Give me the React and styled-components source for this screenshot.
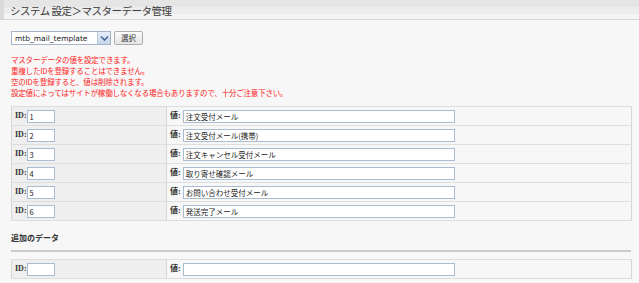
import React from "react";
import styled, { createGlobalStyle } from "styled-components";

const GlobalStyle = createGlobalStyle`
  html, body {
    margin: 0;
    padding: 0;
    background: #f7f7f7;
    font-family: "Noto Sans CJK JP", "DejaVu Sans", sans-serif;
    color: #333;
  }
`;

const rows = [
  { id: "1", value: "注文受付メール" },
  { id: "2", value: "注文受付メール(携帯)" },
  { id: "3", value: "注文キャンセル受付メール" },
  { id: "4", value: "取り寄せ確認メール" },
  { id: "5", value: "お問い合わせ受付メール" },
  { id: "6", value: "発送完了メール" },
];

export default function App() {
  return (
    <Page>
      <GlobalStyle />
      <TitleBar>
        <h1>システム 設定＞マスターデータ管理</h1>
      </TitleBar>
      <Content>
        <SelectRow>
          <Select>
            <span>mtb_mail_template</span>
            <Arrow>
              <svg width="9" height="7" viewBox="0 0 9 7">
                <path d="M1 1.5 L4.5 5 L8 1.5" fill="none" stroke="#4a6a9a" strokeWidth="1.6" />
              </svg>
            </Arrow>
          </Select>
          <Button>選択</Button>
        </SelectRow>
        <Notice>
          <p>マスターデータの値を設定できます。</p>
          <p>重複したIDを登録することはできません。</p>
          <p>空のIDを登録すると、値は削除されます。</p>
          <p>設定値によってはサイトが稼働しなくなる場合もありますので、十分ご注意下さい。</p>
        </Notice>
        <DataTable>
          <tbody>
            {rows.map((r) => (
              <tr key={r.id}>
                <IdCell>
                  <Label>ID:</Label>
                  <IdInput>{r.id}</IdInput>
                </IdCell>
                <ValueCell>
                  <Label>値:</Label>
                  <ValueInput>{r.value}</ValueInput>
                </ValueCell>
              </tr>
            ))}
          </tbody>
        </DataTable>
        <SubHeading>追加のデータ</SubHeading>
        <DataTable>
          <tbody>
            <tr>
              <IdCell>
                <Label>ID:</Label>
                <IdInput />
              </IdCell>
              <ValueCell>
                <Label>値:</Label>
                <ValueInput />
              </ValueCell>
            </tr>
          </tbody>
        </DataTable>
      </Content>
    </Page>
  );
}

const Page = styled.div`
  width: 639px;
  height: 283px;
  overflow: hidden;
`;

const TitleBar = styled.div`
  height: 19px;
  border-bottom: 1px solid #d8d8d8;
  border-left: 4px solid #dadada;
  background: linear-gradient(#e5e5e5 0, #e5e5e5 7px, #ececec 7px, #ececec 14px, #f4f4f4 14px);
  h1 {
    margin: 0;
    padding-left: 6px;
    font-size: 10.5px;
    letter-spacing: -0.5px;
    font-weight: normal;
    line-height: 21px;
    color: #3a3a3a;
    white-space: pre;
  }
`;

const Content = styled.div`
  padding: 11px 8px 0 11px;
`;

const SelectRow = styled.div`
  display: flex;
  align-items: center;
  gap: 3px;
  height: 14px;
`;

const Select = styled.div`
  box-sizing: border-box;
  width: 100px;
  height: 14px;
  border: 1px solid #a8b4c4;
  background: #fff;
  display: flex;
  align-items: center;
  justify-content: space-between;
  font-family: "DejaVu Sans", sans-serif;
  font-size: 7.5px;
  color: #222;
  span {
    padding-left: 3px;
  }
`;

const Arrow = styled.div`
  width: 12px;
  height: 12px;
  background: linear-gradient(#e8eef8, #c8d6ea);
  border-left: 1px solid #b8c6da;
  display: flex;
  align-items: center;
  justify-content: center;
`;

const Button = styled.div`
  box-sizing: border-box;
  width: 29px;
  height: 14px;
  border: 1px solid #b0b0b0;
  border-radius: 2px;
  background: linear-gradient(#fdfdfd, #e4e4e4);
  font-size: 7.5px;
  line-height: 12px;
  text-align: center;
  color: #333;
`;

const Notice = styled.div`
  margin-top: 9px;
  color: #ff1a1a;
  font-size: 7.5px;
  letter-spacing: -0.2px;
  line-height: 11px;
  p {
    margin: 0;
  }
`;

const DataTable = styled.table`
  margin-top: 8px;
  width: 621px;
  border-collapse: collapse;
  border: 1px solid #d6d6d6;
  td {
    box-sizing: border-box;
    height: 19px;
    padding: 0 0 0 3px;
    border-top: 1px solid #dedede;
    border-bottom: 1px solid #dedede;
    vertical-align: middle;
    white-space: nowrap;
    font-size: 8px;
    line-height: 12px;
  }
`;

const IdCell = styled.td`
  width: 155px;
  background: #efefef;
  border-right: 1px solid #d6d6d6;
`;

const ValueCell = styled.td`
  background: #f7f7f7;
`;

const Label = styled.span`
  display: inline-block;
  vertical-align: middle;
  font-family: "Liberation Serif", "Noto Sans CJK JP", serif;
  font-size: 8px;
  line-height: 12px;
  font-weight: bold;
  color: #333;
`;

const Field = styled.span`
  display: inline-block;
  vertical-align: middle;
  box-sizing: border-box;
  height: 13px;
  margin-left: ${(p) => p.$gap || 0}px;
  border: 1px solid #a9bcd2;
  background: #fff;
  font-size: 7.5px;
  line-height: 11px;
  padding-left: 2px;
  color: #222;
`;

const IdInput = styled(Field)`
  width: 28px;
`;

const ValueInput = styled(Field).attrs({ $gap: 2 })`
  width: 272px;
`;

const SubHeading = styled.h2`
  margin: 11px 0 0;
  padding-bottom: 6px;
  border-bottom: 2px solid #cccccc;
  font-size: 8px;
  font-weight: bold;
  line-height: 12px;
  color: #333;
  & + table {
    margin-top: 7px;
  }
`;
